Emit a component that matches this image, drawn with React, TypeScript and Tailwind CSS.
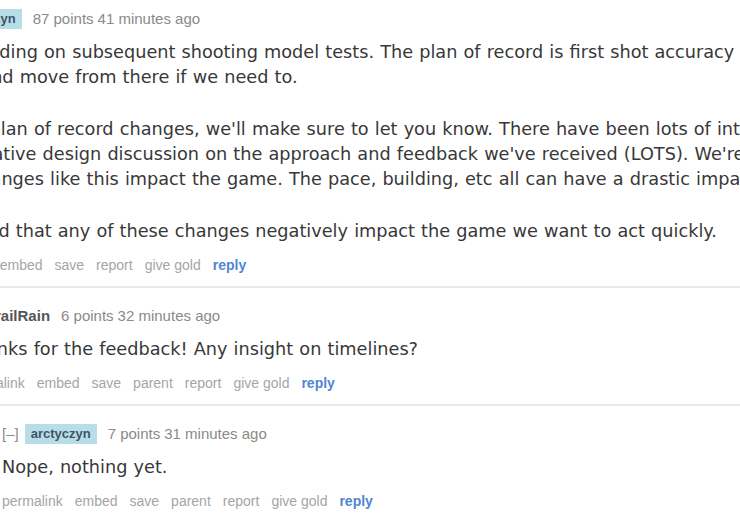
import React from 'react';

const sans = "font-['Liberation_Sans',Arial,sans-serif]";
const verdana = "font-['DejaVu_Sans',Verdana,sans-serif]";

type Comment = {
  user: string;
  flair?: boolean;
  points: string;
  age: string;
  paragraphs: string[][];
  child?: boolean;
  indent: string;
  top: string;
};

const comments: Comment[] = [
  {
    user: 'arctyczyn',
    flair: true,
    points: '87 points',
    age: '41 minutes ago',
    indent: 'ml-0',
    top: 'pt-[9px]',
    paragraphs: [
      [
        'Still pending on subsequent shooting model tests. The plan of record is first shot accuracy as our',
        'focus and move from there if we need to.',
      ],
      [
        "As the plan of record changes, we'll make sure to let you know. There have been lots of internal discussions and",
        "our iterative design discussion on the approach and feedback we've received (LOTS). We're watching",
        'how changes like this impact the game. The pace, building, etc all can have a drastic impact.',
      ],
      ['If we find that any of these changes negatively impact the game we want to act quickly.'],
    ],
  },
  {
    user: 'TrailRain',
    points: '6 points',
    age: '32 minutes ago',
    child: true,
    indent: 'ml-[37px]',
    top: 'pt-[18px]',
    paragraphs: [['Thanks for the feedback! Any insight on timelines?']],
  },
  {
    user: 'arctyczyn',
    flair: true,
    points: '7 points',
    age: '31 minutes ago',
    child: true,
    indent: 'ml-[75px]',
    top: 'pt-[18px]',
    paragraphs: [['Nope, nothing yet.']],
  },
];

function CommentBlock({c, last}: {c: Comment; last: boolean}) {
  const actions = ['permalink', 'embed', 'save'];
  if (c.child) actions.push('parent');
  actions.push('report', 'give gold');

  return (
    <div className={c.top}>
      <div className={c.indent}>
        <div className={`flex items-center h-5 text-[15px] leading-5 text-[#8a8a8a] whitespace-nowrap ${sans}`}>
          <span>[–]</span>
          {c.flair ? (
            <span className="ml-1.5 inline-flex items-center h-5 px-1.5 bg-[#b9dde8] text-[13px] font-bold text-[#3e5566]">
              {c.user}
            </span>
          ) : (
            <span className="ml-1.5 font-bold text-[#555]">{c.user}</span>
          )}
          <span className="ml-[11px]">{c.points}</span>
          <span className="ml-1">{c.age}</span>
        </div>
        <div className={`mt-[11px] text-[17.7px] leading-[25px] [word-spacing:0.5px] text-[#383838] ${verdana}`}>
          {c.paragraphs.map((p, i) => (
            <div key={i} className={i < c.paragraphs.length - 1 ? 'mb-[27px]' : ''}>
              {p.map((line, j) => (
                <div key={j} className="whitespace-nowrap">
                  {line}
                </div>
              ))}
            </div>
          ))}
        </div>
        <ul className={`mt-[11px] flex gap-3 h-5 items-center text-[14px] leading-5 text-[#a5a5a5] whitespace-nowrap ${sans}`}>
          {actions.map(a => (
            <li key={a}>{a}</li>
          ))}
          <li className="font-bold text-[#4f86d6]">reply</li>
        </ul>
      </div>
      {!last && <div className="mt-[11px] h-[2px] bg-[#e9e9e9] mr-[-200px]" />}
    </div>
  );
}

export default function App() {
  return (
    <div className="w-[740px] h-[520px] overflow-hidden bg-white">
      <div className="-ml-[73px] w-[1000px]">
        {comments.map((c, i) => (
          <CommentBlock key={i} c={c} last={i === comments.length - 1} />
        ))}
      </div>
    </div>
  );
}
